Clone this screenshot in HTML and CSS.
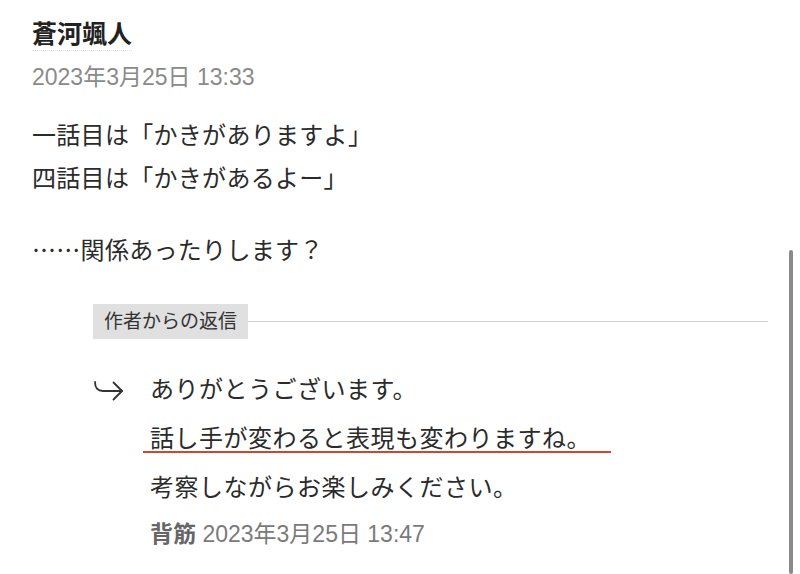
FILE: index.html
```html
<!DOCTYPE html>
<html lang="ja">

<head>
    <meta charset="UTF-8">
    <meta name="viewport" content="width=device-width, initial-scale=1.0">
    <title>コメント</title>
    <link rel="stylesheet" href="styles.css">
</head>

<body>
    <div class="comment">
        <div class="author"><span class="author-name">蒼河颯人</span></div>
        <div class="date">2023年3月25日 13:33</div>

        <div class="comment-body">
            <p>一話目は「かきがありますよ」<br>四話目は「かきがあるよー」</p>
            <p>……関係あったりします？</p>
        </div>

        <div class="reply">
            <div class="reply-head">
                <span class="reply-label">作者からの返信</span>
            </div>

            <div class="reply-main">
                <svg class="reply-icon" width="32" height="22" viewBox="0 0 32 22" fill="none" stroke="#333" stroke-width="1.8" stroke-linecap="round" stroke-linejoin="round">
                    <path d="M2 2 C2 8 4.5 11 10 11 H29"/>
                    <path d="M20.5 2.5 L29 11 L20.5 19.5"/>
                </svg>
                <div class="reply-body">
                    <p>ありがとうございます。<br><span class="marked">話し手が変わると表現も変わりますね。</span><br>考察しながらお楽しみください。</p>
                    <div class="reply-meta"><span class="reply-author">背筋</span> 2023年3月25日 13:47</div>
                </div>
            </div>
        </div>
    </div>

    <div class="scrollbar"></div>
</body>

</html>
```

FILE: styles.css
```css
body {
    margin: 0;
    background-color: #fff;
    color: #2b2b2b;
    font-family: "Liberation Sans", "Noto Sans CJK JP", sans-serif;
}

.comment {
    padding: 19px 32px 0 32px;
}

.author-name {
    display: inline-block;
    font-size: 25px;
    font-weight: bold;
    line-height: 31px;
    color: #222;
    border-bottom: 1px dotted #dcdcdc;
}

.date {
    margin-top: 12px;
    font-size: 23px;
    line-height: 28px;
    color: #8a8a8a;
}

.comment-body {
    margin-top: 21px;
    font-family: "Noto Sans CJK JP", sans-serif;
    font-size: 24px;
    letter-spacing: 0.3px;
    line-height: 43px;
}

.comment-body p {
    margin: 0;
}

.comment-body p + p {
    margin-top: 29px;
}

.reply {
    margin-left: 61px;
    margin-top: 34px;
}

.reply-head {
    display: flex;
    align-items: center;
}

.reply-head::after {
    content: "";
    flex: 1;
    height: 1px;
    background-color: #cfcfcf;
}

.reply-label {
    background-color: #e0e0e0;
    color: #333;
    font-size: 19px;
    line-height: 35px;
    padding: 0 11px;
}

.reply-main {
    display: flex;
    margin-top: 24px;
}

.reply-icon {
    flex-shrink: 0;
    margin-top: 17px;
    margin-right: 25px;
}

.reply-body p {
    margin: 0;
    font-family: "Noto Sans CJK JP", sans-serif;
    font-size: 24px;
    letter-spacing: 0.5px;
    line-height: 49px;
}

.marked {
    display: inline-block;
    line-height: 28px;
    padding: 0 20px 0 7px;
    margin-left: -7px;
    border-bottom: 2px solid #d5432f;
}

.reply-meta {
    margin-top: 10px;
    font-size: 23px;
    line-height: 28px;
    color: #7a7a7a;
}

.reply-author {
    font-weight: bold;
    color: #666;
}

.scrollbar {
    position: fixed;
    right: 7px;
    top: 250px;
    bottom: 0;
    width: 4px;
    border-radius: 2px;
    background-color: #8a8a8a;
}
```
